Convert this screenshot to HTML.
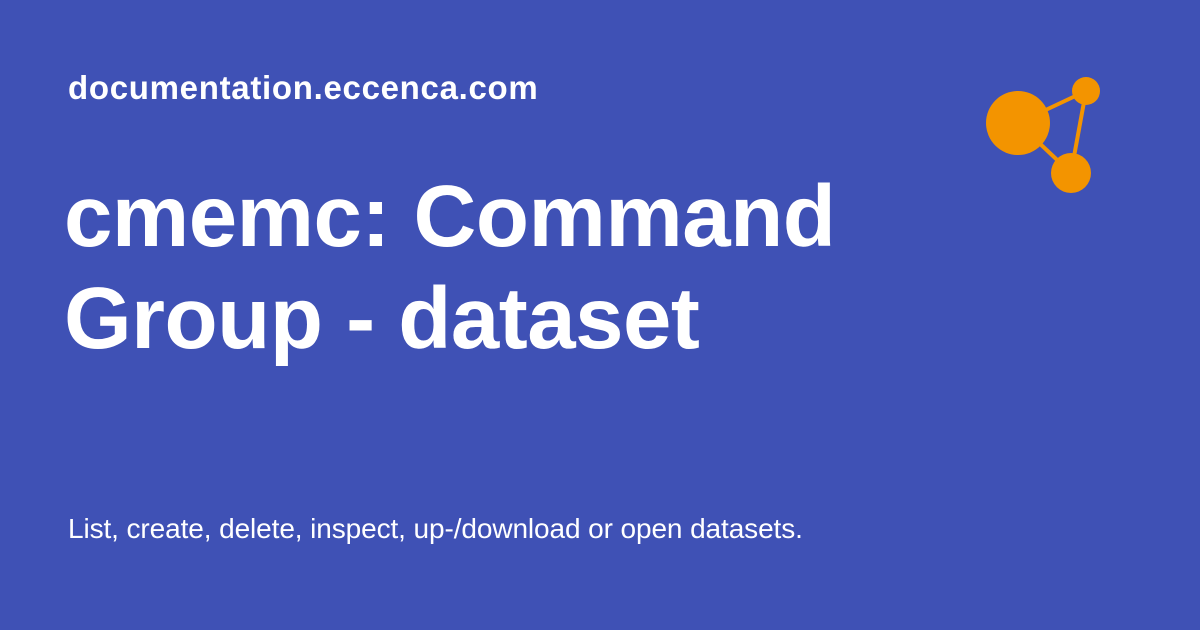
<!DOCTYPE html>
<html><head><style>
body{margin:0;width:1200px;height:630px;background:#3f51b5;overflow:hidden;font-family:"Liberation Sans",sans-serif;color:#fff;position:relative}
.d{position:absolute;left:68px;top:69px;font-size:33px;font-weight:bold;letter-spacing:0.7px}
.t{position:absolute;left:64px;top:166px;font-size:87px;font-weight:bold;line-height:102px;letter-spacing:-0.5px}
.s{position:absolute;left:68px;top:513px;font-size:28px;letter-spacing:-0.1px}
svg{position:absolute;left:0;top:0}
</style></head><body>
<div class="d">documentation.eccenca.com</div>
<div class="t">cmemc: Command<br>Group - dataset</div>
<div class="s">List, create, delete, inspect, up-/download or open datasets.</div>
<svg width="1200" height="630"><g stroke="#f39400" stroke-width="4"><line x1="1018" y1="123" x2="1086" y2="91"/><line x1="1086" y1="91" x2="1071" y2="173"/><line x1="1018" y1="123" x2="1071" y2="173"/></g>
<g fill="#f39400"><circle cx="1018" cy="123" r="32"/><circle cx="1086" cy="91" r="14"/><circle cx="1071" cy="173" r="20"/></g></svg>
</body></html>
